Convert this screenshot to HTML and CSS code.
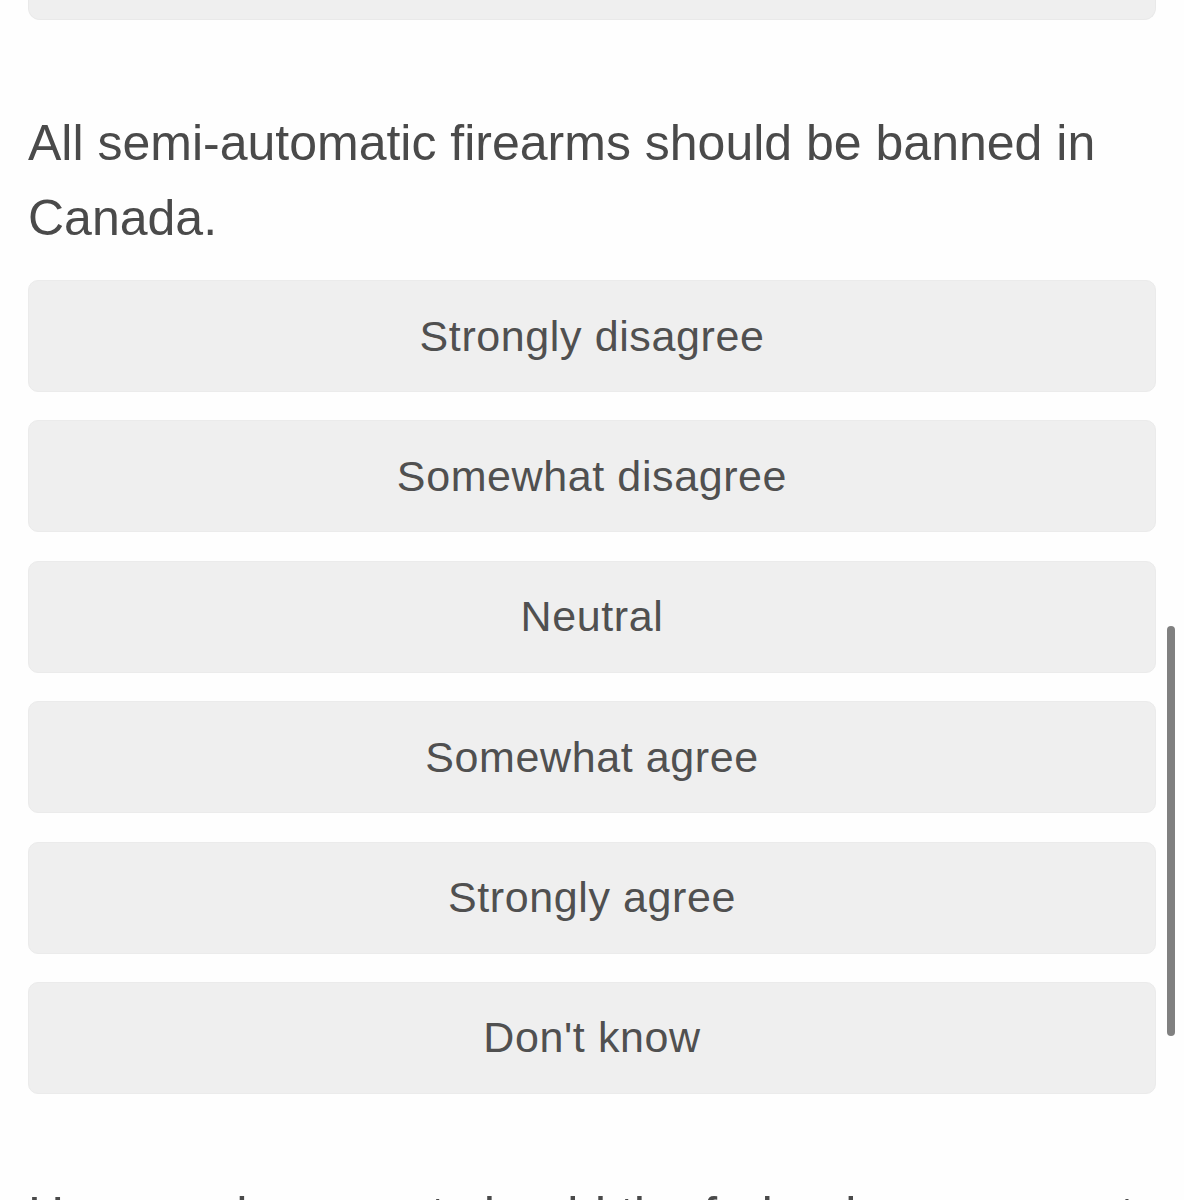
FILE: index.html
```html
<!DOCTYPE html>
<html lang="en">
<head>
<meta charset="utf-8">
<title>Survey</title>
<link rel="stylesheet" href="styles.css">
</head>
<body>
<main class="page">
  <div class="prev-box"></div>
  <section class="question">
    <p class="question-text">All semi-automatic firearms should be banned in Canada.</p>
    <div class="options">
      <button class="option">Strongly disagree</button>
      <button class="option">Somewhat disagree</button>
      <button class="option">Neutral</button>
      <button class="option">Somewhat agree</button>
      <button class="option">Strongly agree</button>
      <button class="option">Don't know</button>
    </div>
  </section>
  <section class="question next">
    <p class="question-text">How much support should the federal government provide?</p>
  </section>
</main>
<div class="scrollbar"></div>
</body>
</html>
```
FILE: styles.css
```css
html, body {
  margin: 0;
  padding: 0;
  background: #fefefe;
  height: 1200px;
  overflow: hidden;
}
body {
  font-family: "Liberation Sans", Arial, sans-serif;
  color: #4a4a4a;
}
.page {
  padding: 0 28px;
  display: flex;
  flex-direction: column;
}
.prev-box {
  height: 19px;
  background: #efefef;
  border: 1px solid #e9e9e9;
  border-top: none;
  border-radius: 0 0 12px 12px;
}
.question {
  margin-top: 86px;
  display: flex;
  flex-direction: column;
}
.question.next {
  margin-top: 84px;
}
.question-text {
  margin: 0;
  font-size: 50px;
  line-height: 75px;
  color: #4a4a4a;
}
.options {
  margin-top: 24px;
  display: flex;
  flex-direction: column;
  gap: 28.4px;
}
.option {
  height: 112px;
  border: 1px solid #ebebeb;
  border-radius: 10px;
  background: #efefef;
  font-family: "Liberation Sans", Arial, sans-serif;
  font-size: 43px;
  letter-spacing: 0.6px;
  color: #505050;
  text-align: center;
  padding: 0;
  margin: 0;
}
.scrollbar {
  position: fixed;
  left: 1167px;
  top: 626px;
  width: 8px;
  height: 410px;
  background: #808080;
  border-radius: 4px;
}
```
